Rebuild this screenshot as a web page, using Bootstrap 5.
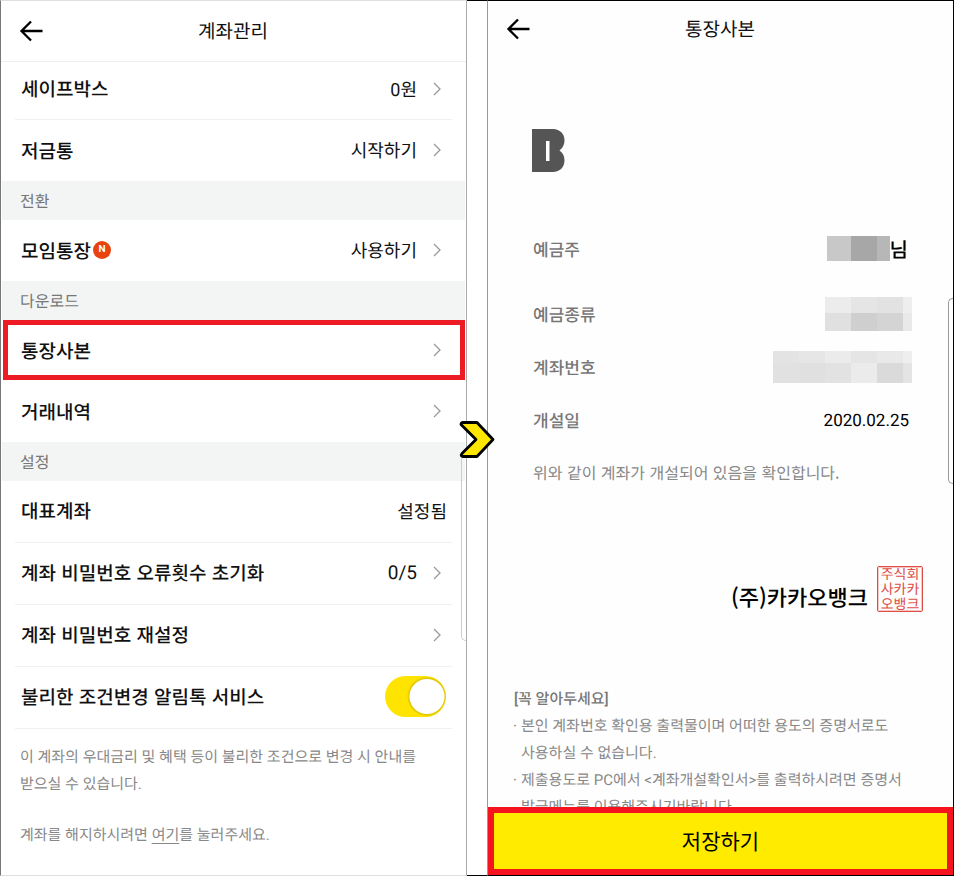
<!DOCTYPE html>
<html lang="ko">
<head>
<meta charset="utf-8">
<meta name="viewport" content="width=device-width, initial-scale=1">
<title>계좌관리 · 통장사본</title>
<link href="https://cdn.jsdelivr.net/npm/bootstrap@5.3.0/dist/css/bootstrap.min.css" rel="stylesheet">
<style>
  body { font-size: 19px; line-height: 27px; color: #111; background: #fff; word-break: keep-all; text-rendering: geometricPrecision; }
  .ko { font-family: "Noto Sans CJK KR", sans-serif; }
  .phone { flex: 1 1 0; min-width: 0; }
  .phone-left { border: 1px solid #e0e0e0; border-left-color: #777; border-right-color: #aaa; }
  .phone-right { border: 1px solid #000; border-left: 1px solid #999; background: #fefefe; }
  .between { width: 20px; border-top: 1px solid #000; border-bottom: 1px solid #000; }
  .next-mark { top: 48%; left: -8px; z-index: 2; }
  .top-left { height: 61px; padding-bottom: 2px; border-bottom: 1px solid #eee; }
  .top-right { height: 55px; padding-bottom: 1px; }
  .back { width: 63px; padding: 0 0 0 18px; border: 0; background: none; text-align: left; line-height: 1; }
  .item { height: 61px; margin: 0 14px; padding: 0 11px 1px 6px; gap: 16px; font-weight: 500; color: #111; text-decoration: none; }
  .first .item:first-child { height: 58px; }
  .first .lined .item { padding-bottom: 4px; }
  .lined .item { border-bottom: 1px solid #f0f0f0; }
  .tall .item { height: 62px; padding-bottom: 2px; }
  .item.wide-end { padding-right: 5px; }
  .item.picked { height: 60px; margin: 0 1px 1px 2px; padding: 0 19px 0 13px; border: 5px solid #ed1c24; }
  .val { padding-top: 3px; font-family: Roboto, "Noto Sans CJK KR", sans-serif; font-size: 18px; font-weight: 400; }
  .num { padding-top: 0; font-size: 19px; }
  .group-name { height: 39px; margin: 0 1px; padding: 0 18px; background: #f3f5f5; color: #777; font-size: 16px; font-weight: 400; }
  .new { width: 18px; height: 18px; margin-left: 2px; border-radius: 50%; background: #e8430f; color: #fff; font: 700 10px/18px Roboto, sans-serif; text-align: center; }
  .toggle { width: 61px; height: 41px; margin: 0 1px 0 0; border: 0; border-radius: 21px; appearance: none;
    background: radial-gradient(circle at calc(100% - 19px) 50%, #fff 17px, #e0c400 18px, #ffe400 20px); }
  .hint, .notice { font-family: Roboto, "Noto Sans CJK KR", sans-serif; font-size: 15px; color: #888; }
  .hint { padding: 15px 19px; }
  .hint p { margin: 0 0 24px; }
  .hint a, .hint a:hover { color: #888; text-underline-offset: 3px; }
  .edge { width: 5px; height: 186px; border: 1px solid #ccc; border-right: 0; border-radius: 5px 0 0 5px; right: 0; }
  .edge-low { top: 52%; }
  .edge-mid { top: 34%; border-color: #999; }
  .paper { padding: 73px 41px 0 44px; }
  .facts { margin-top: 40px; }
  .facts dt { font-size: 17px; font-weight: 500; color: #777; }
  .facts dd { margin: 0; }
  .fact { height: 53px; padding-left: 1px; }
  .fact:first-child { height: 75px; padding-bottom: 2px; }
  .facts .date { font-family: Roboto, sans-serif; font-size: 17px; padding: 3px 3px 0 0; color: #000; }
  .sir { font-size: 20px; font-weight: 500; color: #000; padding-right: 4px; }
  .confirm { height: 53px; padding-left: 1px; font-size: 16px; color: #888; }
  .signed { margin-top: 67px; padding-right: 30px; gap: 9px; font-size: 22px; font-weight: 500; color: #000; }
  .signed span { padding-bottom: 1px; }
  .seal { width: 46px; height: 46px; border: 1px solid #dc5048; border-radius: 2px; outline: 1px solid #f5c4c0; outline-offset: -2px; color: #dc5048; font-size: 14px; font-weight: 400; line-height: 15px; text-align: center; }
  .notice { padding: 74px 40px 0 26px; }
  .notice h2 { margin: 0; font-size: 15px; line-height: 27px; font-weight: 500; color: #777; }
  .notice li { padding-left: 7px; position: relative; }
  .notice li::before { content: "·"; position: absolute; left: -1px; }
  .save { height: 68px; border: 6px solid #f5141e; border-radius: 0; background: #ffeb00; color: #000; font-size: 21px; }
  .save:hover { border-color: #f5141e; background: #ffe000; }
</style>
</head>
<body>
<svg class="d-none" aria-hidden="true">
  <symbol id="chev" viewBox="0 0 8 14"><path d="M1 1l6 6-6 6" fill="none" stroke="#999" stroke-width="1.3"/></symbol>
  <symbol id="arrow" viewBox="0 0 24 22"><path d="M12 1.500L2.500 11l9.500 9.500M2.500 11H23.500" fill="none" stroke="#000" stroke-width="2.300"/></symbol>
</svg>
<div class="d-flex vh-100 ko">
  <main class="phone phone-left position-relative overflow-hidden">
    <header class="top-left d-flex align-items-center">
      <button class="back" type="button" aria-label="뒤로"><svg width="24" height="22"><use href="#arrow"/></svg></button>
      <div class="flex-fill text-center pe-5 me-3">계좌관리</div>
    </header>

    <nav class="first">
      <div class="lined"><a class="item d-flex align-items-center" href="#"><span class="me-auto">세이프박스</span><span class="val">0원</span><svg width="8" height="14"><use href="#chev"/></svg></a></div>
      <a class="item d-flex align-items-center" href="#"><span class="me-auto">저금통</span><span class="val">시작하기</span><svg width="8" height="14"><use href="#chev"/></svg></a>
    </nav>

    <h2 class="group-name d-flex align-items-center mb-0">전환</h2>
    <nav><a class="item d-flex align-items-center" href="#"><span class="me-auto d-flex align-items-center">모임통장<span class="new">N</span></span><span class="val">사용하기</span><svg width="8" height="14"><use href="#chev"/></svg></a></nav>

    <h2 class="group-name d-flex align-items-center mb-0">다운로드</h2>
    <nav>
      <a class="item picked d-flex align-items-center" href="#"><span class="me-auto">통장사본</span><svg width="8" height="14"><use href="#chev"/></svg></a>
      <a class="item d-flex align-items-center" href="#"><span class="me-auto">거래내역</span><svg width="8" height="14"><use href="#chev"/></svg></a>
    </nav>

    <h2 class="group-name d-flex align-items-center mb-0">설정</h2>
    <div class="lined tall">
      <div class="item wide-end d-flex align-items-center"><span class="me-auto">대표계좌</span><span class="val">설정됨</span></div>
      <a class="item d-flex align-items-center" href="#"><span class="me-auto">계좌 비밀번호 오류횟수 초기화</span><span class="val num">0/5</span><svg width="8" height="14"><use href="#chev"/></svg></a>
      <a class="item d-flex align-items-center" href="#"><span class="me-auto">계좌 비밀번호 재설정</span><svg width="8" height="14"><use href="#chev"/></svg></a>
      <div class="item wide-end d-flex align-items-center"><label class="me-auto" for="talk">불리한 조건변경 알림톡 서비스</label><input class="toggle" type="checkbox" role="switch" id="talk" checked></div>
    </div>

    <div class="hint">
      <p>이 계좌의 우대금리 및 혜택 등이 불리한 조건으로 변경 시 안내를<br>받으실 수 있습니다.</p>
      <p>계좌를 해지하시려면 <a href="#">여기</a>를 눌러주세요.</p>
    </div>
    <div class="edge edge-low position-absolute"></div>
  </main>

  <div class="between position-relative">
    <svg class="next-mark position-absolute" width="36" height="38" viewBox="0 0 36 38"><path d="M2 3.500Q2 1.500 4 1.500H18L34 18.500 18 35.500H4Q1 35 3 32.500L17 18.500 3 4.500Z" fill="#ffe600" stroke="#000" stroke-width="2.800" stroke-linejoin="round"/></svg>
  </div>

  <section class="phone phone-right d-flex flex-column position-relative">
    <header class="top-right d-flex align-items-center flex-shrink-0">
      <button class="back" type="button" aria-label="뒤로"><svg width="24" height="22"><use href="#arrow"/></svg></button>
      <div class="flex-fill text-center pe-5 me-3">통장사본</div>
    </header>
    <div class="flex-fill overflow-hidden">
      <div class="paper">
        <svg class="d-block" width="33" height="43" viewBox="0 0 33 43" role="img" aria-label="B"><path d="M0 0H21C28 0 32.500 5 32.500 11C32.500 16 30.500 19 27.500 21.500C31 24 32.500 27 32.500 31.500C32.500 38 28 43 21 43H0Z" fill="#555"/><path d="M14 12h3.500v20H14z" fill="#fff"/></svg>
        <dl class="facts mb-0">
          <div class="fact d-flex align-items-center justify-content-between"><dt>예금주</dt><dd class="d-flex align-items-center">
            <svg width="63" height="25" shape-rendering="crispEdges" role="img" aria-label="가려진 이름"><path d="M0 0h24v25H0z" fill="#c8c8c8"/><path d="M24 0h26v25H24z" fill="#a7a7a7"/><path d="M50 0h13v25H50z" fill="#b7b7b7"/></svg><span class="sir">님</span></dd></div>
          <div class="fact d-flex align-items-center justify-content-between"><dt>예금종류</dt><dd>
            <svg class="d-block" width="87" height="34" shape-rendering="crispEdges" role="img" aria-label="가려진 종류"><path d="M0 0h26v16H0z" fill="#ececec"/><path d="M26 0h26v16H26z" fill="#e5e5e5"/><path d="M52 0h26v16H52z" fill="#e2e2e2"/><path d="M78 0h9v16h-9z" fill="#eee"/><path d="M0 16h26v18H0z" fill="#e0e0e0"/><path d="M26 16h26v18H26z" fill="#cfcfcf"/><path d="M52 16h26v18H52z" fill="#d4d4d4"/><path d="M78 16h9v18h-9z" fill="#e9e9e9"/></svg></dd></div>
          <div class="fact d-flex align-items-center justify-content-between"><dt>계좌번호</dt><dd>
            <svg class="d-block" width="139" height="32" shape-rendering="crispEdges" role="img" aria-label="가려진 번호"><path d="M0 0h26v12H0z" fill="#e3e3e3"/><path d="M26 0h26v12H26z" fill="#e6e6e6"/><path d="M52 0h26v12H52z" fill="#ebebeb"/><path d="M78 0h26v12H78z" fill="#e5e5e5"/><path d="M104 0h26v12h-26z" fill="#e9e9e9"/><path d="M130 0h9v12h-9z" fill="#eee"/><path d="M0 12h26v20H0z" fill="#e1e1e1"/><path d="M26 12h26v20H26z" fill="#e0e0e0"/><path d="M52 12h26v20H52z" fill="#e2e2e2"/><path d="M78 12h26v20H78z" fill="#ebebeb"/><path d="M104 12h26v20h-26z" fill="#dadada"/><path d="M130 12h9v20h-9z" fill="#e4e4e4"/></svg></dd></div>
          <div class="fact d-flex align-items-center justify-content-between"><dt>개설일</dt><dd class="date">2020.02.25</dd></div>
        </dl>
        <div class="confirm d-flex align-items-center">위와 같이 계좌가 개설되어 있음을 확인합니다.</div>
      </div>
      <div class="signed d-flex justify-content-end align-items-end"><span>(주)카카오뱅크</span><div class="seal">주식회<br>사카카<br>오뱅크</div></div>
      <div class="notice">
        <h2>[꼭 알아두세요]</h2>
        <ul class="list-unstyled mb-0">
          <li>본인 계좌번호 확인용 출력물이며 어떠한 용도의 증명서로도 사용하실 수 없습니다.</li>
          <li>제출용도로 PC에서 &lt;계좌개설확인서&gt;를 출력하시려면 증명서 발급메뉴를 이용해주시기바랍니다.</li>
        </ul>
      </div>
    </div>
    <button class="btn save w-100 flex-shrink-0" type="button">저장하기</button>
    <div class="edge edge-mid position-absolute"></div>
  </section>
</div>
<script src="https://cdn.jsdelivr.net/npm/bootstrap@5.3.0/dist/js/bootstrap.bundle.min.js"></script>
</body>
</html>
